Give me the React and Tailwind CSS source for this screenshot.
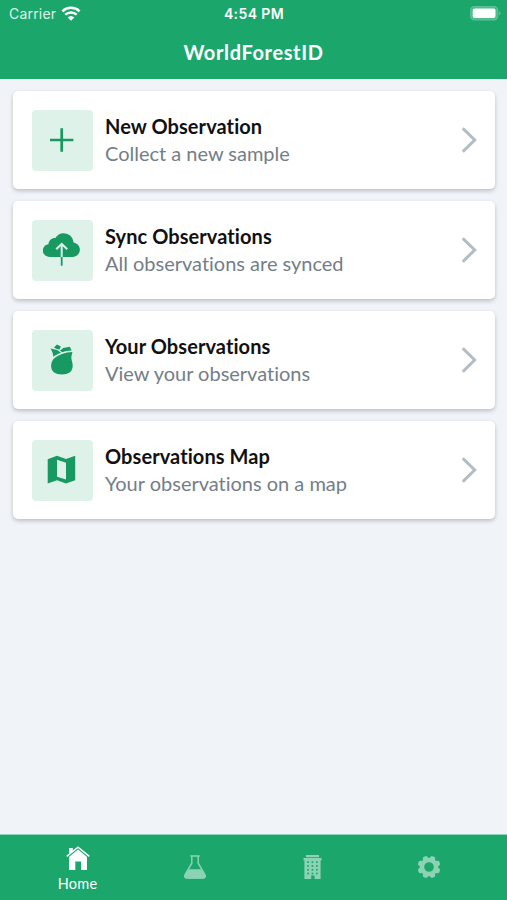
import React from "react";

function PlusIcon() {
  return (
    <svg viewBox="0 0 61 61" className="size-[61px]" fill="none" stroke="#189962" strokeWidth="2.7">
      <path d="M29.700 18.300V41.700M18 30H41.400" />
    </svg>
  );
}

function CloudIcon() {
  return (
    <svg viewBox="0.3 0.3 61 61" className="size-[61px]">
      <path
        fill="#189962"
        d="M18.500 37.200C14 37.200 11.200 34.500 11.200 31c0-3.400 2.300-5.900 5.500-6.400.4-4 3.200-6.600 7-6.400 1.900-3.100 4.600-4.700 8-4.700 5.500 0 9.700 3.800 10.200 9.200 3.800.8 6.300 3.600 6.300 7.200 0 4.200-3 7.300-7.800 7.300z"
      />
      <path d="M30 38V25M24.500 29.600l5.500-5.500 5.500 5.500" fill="none" stroke="#dff2e9" strokeWidth="2" />
      <path d="M30 37.200V46" stroke="#189962" strokeWidth="1.800" />
    </svg>
  );
}

function SackIcon() {
  return (
    <svg viewBox="0.3 0.5 61 61" className="size-[61px]" fill="#189962">
      <path d="M40.700 22.600C33.500 22.700 26.500 25.600 21.600 29.700c-1.600 2.400-2.300 4.700-2.200 7.300.3 5.300 4.300 8 10.800 8s10.600-2.800 10.800-8.500c.1-2.800-.9-5-1.300-7.300-.4-1.900.7-4 1-6.600z" />
      <path d="M18.900 19l6.600 1.600 3.900 2.600c-2.800.9-5.500 2.200-7.800 4-.1-3.200-1.300-5.700-2.700-8.200z" />
      <path d="M22.300 18l2.900-2.900 4 1.800-1.500 3.100-2.800-.6zM28.300 21.300l3.200-2.700 6.500-1.300 2 3.800c-3.600.1-6.500.8-9.300 1.600z" />
    </svg>
  );
}

function MapIcon() {
  return (
    <svg viewBox="0.5 0 61 61" className="size-[61px]">
      <path
        fill="#189962"
        fillRule="evenodd"
        d="M16.200 19.200l9.300-3.400 9 3.100 9.200-3.200v24.500l-9.200 3.300-9-3.200-9.300 3.200zM25.500 19.800v16.900l9 2.900V22.800z"
      />
    </svg>
  );
}

function HomeIcon() {
  return (
    <svg viewBox="0 0 24 24" className="h-6 w-6" fill="#fff">
      <path d="M3 10.700L12 3.300l9 7.400V24h-6v-8.500H9.300V24H3z" />
      <path d="M3 2h3.800v3.300L3 8.500z" />
      <path d="M.7 10.300L12 1.100l11.300 9.200" fill="none" stroke="#fff" strokeWidth="1.500" />
      <path d="M1.900 11.300L12 3.100l10.100 8.200" fill="none" stroke="#1ba76b" strokeWidth=".5" />
    </svg>
  );
}

function FlaskIcon() {
  return (
    <svg viewBox="0 0 24 24" className="h-6 w-6" fill="#8bd3b4">
      <path d="M7.300.9h9.400M8.800 1.500v6.700L2.300 19.300c-1.300 2.100-.5 3.800 2.200 3.800h15c2.700 0 3.500-1.700 2.200-3.800L15.200 8.200V1.500" fill="none" stroke="#8bd3b4" strokeWidth="1.500" />
      <path d="M5.200 14.200h13.600l3.800 5.800c.8 2-.4 3.500-3 3.500H4.400c-2.600 0-3.800-1.500-3-3.500z" />
    </svg>
  );
}

function BuildingIcon() {
  const rows = [6.3, 10.100, 13.900, 17.700];
  const columns = [4.200, 8.600, 13];
  return (
    <svg viewBox="0 0 19 24" className="h-6 w-[19px]">
      <path fill="#8bd3b4" d="M3 0h13v2.200H3zM.5 2.900h18v2.500h-.9v18.500h-6v-3.300H8.200v3.300H1.400V5.400H.5z" />
      {rows.map((y) =>
        columns.map((x) => <rect key={x + "-" + y} x={x} y={y} width="1.700" height="1.700" fill="#1ba76b" />)
      )}
    </svg>
  );
}

function GearIcon() {
  const teeth = [22.5, 67.5, 112.5, 157.5, 202.5, 247.5, 292.5, 337.5];
  return (
    <svg viewBox="-12 -12 24 24" className="h-6 w-6">
      <circle r="7" fill="none" stroke="#8bd3b4" strokeWidth="4.400" />
      {teeth.map((a) => (
        <path key={a} d="M-3.200 -8L-2 -11.200Q0 -11.800 2 -11.200L3.200 -8z" fill="#8bd3b4" transform={`rotate(${a})`} />
      ))}
    </svg>
  );
}

const cards = [
  { title: "New Observation", detail: "Collect a new sample", Icon: PlusIcon },
  { title: "Sync Observations", detail: "All observations are synced", Icon: CloudIcon },
  { title: "Your Observations", detail: "View your observations", Icon: SackIcon },
  { title: "Observations Map", detail: "Your observations on a map", Icon: MapIcon },
];

function Card({ title, detail, Icon }) {
  return (
    <div className="flex h-[98px] items-center rounded-[5px] bg-white pr-[17px] pl-[18.5px] shadow-[0_2px_4px_rgba(0,0,0,0.22)]">
      <div className="size-[61px] shrink-0 rounded-[4px] bg-[#dff2e9]">
        <Icon />
      </div>
      <div className="ml-[12.5px] flex-1 text-[20px] leading-[27px] whitespace-nowrap">
        <div className="font-bold tracking-[0.08px] text-[#111]">{title}</div>
        <div className="tracking-[-0.01px] text-[#737e88]">{detail}</div>
      </div>
      <svg viewBox="0 0 18 28" className="h-7 w-[18px]" fill="none" stroke="#b4bdc3" strokeWidth="3" strokeLinecap="round">
        <path d="M3.600 3.200L14.700 14 3.600 24.800" />
      </svg>
    </div>
  );
}

export default function App() {
  return (
    <div className="flex h-[900px] w-[507px] flex-col overflow-hidden bg-[#f0f4f8] font-['Lato',sans-serif]">
      <header className="h-[79px] shrink-0 bg-[#1ba76b] text-white">
        <div className="grid h-[27px] grid-cols-3 items-center pr-[6px] pl-[9px] font-['Inter',sans-serif] text-[14px]">
          <div className="flex items-center gap-[5px]">
            <span className="tracking-[0.2px] text-[#dcf6ea]">Carrier</span>
            <svg viewBox="0 0 20 15" className="h-[15px] w-5" fill="none" stroke="#fff" strokeWidth="2.500">
              <path d="M1.400 5.300a12.500 12.500 0 0 1 17.200 0M4.300 8.700a8.300 8.300 0 0 1 11.400 0" />
              <path d="M6.700 11.400a4.900 4.900 0 0 1 6.600 0L10 14.700z" fill="#fff" stroke="none" />
            </svg>
          </div>
          <div className="pr-[2px] text-center font-semibold tracking-[0.4px]">4:54 PM</div>
          <svg viewBox="0 0 31 15" className="h-[15px] w-[31px] justify-self-end">
            <rect x=".7" y=".7" width="27" height="13.200" rx="3.600" fill="#4fba8c" stroke="#5fc096" strokeWidth="1.200" />
            <rect x="2.700" y="2.500" width="22.800" height="9.600" rx="2" fill="#fff" />
            <path d="M29 5.200v4.200c2-.7 2-3.500 0-4.200z" fill="#5fc096" />
          </svg>
        </div>
        <div className="text-center text-[20px] leading-[50px] font-bold tracking-[0.62px]">WorldForestID</div>
      </header>

      <main className="flex flex-1 flex-col gap-3 px-3 pt-3 pl-[13px]">
        {cards.map((card) => (
          <Card key={card.title} {...card} />
        ))}
      </main>

      <nav className="grid h-[66px] shrink-0 grid-cols-4 border-t border-[#8dd3b5] bg-[#1ba76b] px-[19px]">
        <div className="flex flex-col items-center pt-[11px]">
          <HomeIcon />
          <span className="mt-[4.5px] text-[14.5px] leading-[18px] tracking-[0.3px] text-white">Home</span>
        </div>
        <div className="flex items-center justify-center pb-px">
          <FlaskIcon />
        </div>
        <div className="flex items-center justify-center pb-px">
          <BuildingIcon />
        </div>
        <div className="flex items-center justify-center pb-px">
          <GearIcon />
        </div>
      </nav>
    </div>
  );
}
